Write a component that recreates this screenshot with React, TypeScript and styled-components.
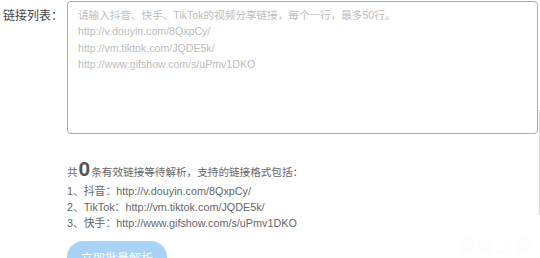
import React from "react";
import styled, { createGlobalStyle } from "styled-components";

const Global = createGlobalStyle`
  html, body { margin: 0; padding: 0; background: #ffffff; }
  body { font-family: "Liberation Sans", Arial, "Noto Sans CJK SC", sans-serif; overflow: hidden; }
`;

const Page = styled.div`
  width: 540px;
  height: 258px;
  position: relative;
  overflow: hidden;
`;

const Row = styled.div`
  display: flex;
  align-items: flex-start;
  padding-top: 1px;
`;

const Label = styled.div`
  width: 67px;
  flex: none;
  box-sizing: border-box;
  padding: 7px 0 0 3px;
  font-size: 12px;
  color: #444;
  line-height: 16px;
`;

const Area = styled.textarea`
  width: 471px;
  height: 133px;
  box-sizing: border-box;
  margin: 0;
  border: 1px solid #7fbcc4;
  border-radius: 4px;
  padding: 5px 10px;
  font-family: "Liberation Sans", Arial, "Noto Sans CJK SC", sans-serif;
  font-size: 10.6px;
  line-height: 16.3px;
  color: #333;
  resize: none;
  outline: none;
  &::placeholder { color: #bdbdbd; }
`;

const Info = styled.div`
  margin-left: 67px;
  padding-top: 25px;
  color: #666;
  font-size: 10.6px;
`;

const Summary = styled.div`
  display: flex;
  align-items: baseline;
  height: 20px;
  line-height: 20px;
`;

const Count = styled.span`
  font-size: 21px;
  font-weight: bold;
  color: #555;
  margin: 0 1px;
  line-height: 20px;
`;

const List = styled.ul`
  list-style: none;
  margin: 4px 0 0;
  padding: 0;
`;

const Item = styled.li`
  font-size: 10.8px;
  height: 16px;
  line-height: 16px;
`;

const Button = styled.button`
  display: block;
  margin-top: 10px;
  width: 100px;
  height: 32px;
  border: none;
  border-radius: 16px;
  background: #a9d3f6;
  color: #fff;
  font-size: 12px;
  font-family: "Liberation Sans", Arial, "Noto Sans CJK SC", sans-serif;
  padding: 0;
`;

const ScrollEdge = styled.div`
  position: absolute;
  right: 0;
  top: 110px;
  width: 1px;
  height: 105px;
  background: #dcdcdc;
`;

const Watermark = styled.div`
  position: absolute;
  right: 8px;
  bottom: 0px;
  font-size: 18px;
  font-style: italic;
  color: rgba(255, 255, 255, 0.95);
  text-shadow: 0 0 1px rgba(0, 0, 0, 0.05);
  letter-spacing: 1px;
`;

export default function App() {
  return (
    <Page>
      <Global />
      <Row>
        <Label>链接列表：</Label>
        <Area
          placeholder={
            "请输入抖音、快手、TikTok的视频分享链接，每个一行，最多50行。\nhttp://v.douyin.com/8QxpCy/\nhttp://vm.tiktok.com/JQDE5k/\nhttp://www.gifshow.com/s/uPmv1DKO"
          }
        />
      </Row>
      <Info>
        <Summary>
          共<Count>0</Count>条有效链接等待解析，支持的链接格式包括：
        </Summary>
        <List>
          <Item>1、抖音：http://v.douyin.com/8QxpCy/</Item>
          <Item>2、TikTok：http://vm.tiktok.com/JQDE5k/</Item>
          <Item>3、快手：http://www.gifshow.com/s/uPmv1DKO</Item>
        </List>
        <Button>立即批量解析</Button>
      </Info>
      <ScrollEdge />
      <Watermark>系统之家</Watermark>
    </Page>
  );
}
